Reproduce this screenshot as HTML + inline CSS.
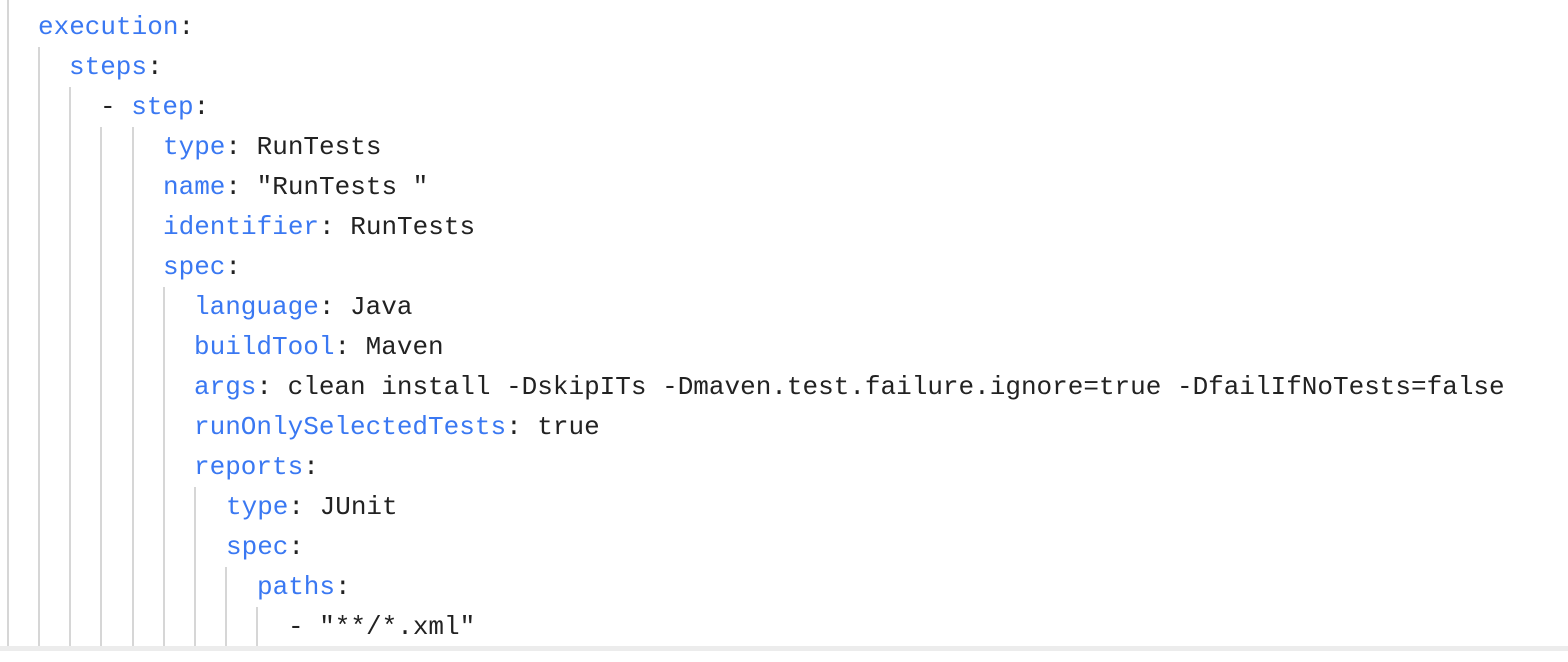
<!DOCTYPE html>
<html><head><meta charset="utf-8"><style>
html,body{margin:0;padding:0;width:1568px;height:662px;overflow:hidden;background:#fff;}
.l{position:absolute;white-space:pre;font-family:"Liberation Mono",monospace;font-size:26px;line-height:40px;color:#222;}
.k{color:#3a78f2;}
.g{position:absolute;width:2px;background:#d6d6d6;}
.bar{position:absolute;left:0;top:646px;width:1568px;height:5px;background:#ececec;}
</style></head><body>
<div class="g" style="left:7px;top:0;height:646px"></div>
<div class="g" style="left:38px;top:47px;height:599px"></div>
<div class="g" style="left:69px;top:87px;height:559px"></div>
<div class="g" style="left:100px;top:127px;height:519px"></div>
<div class="g" style="left:132px;top:127px;height:519px"></div>
<div class="g" style="left:163px;top:287px;height:359px"></div>
<div class="g" style="left:194px;top:487px;height:159px"></div>
<div class="g" style="left:225px;top:567px;height:79px"></div>
<div class="g" style="left:256px;top:607px;height:39px"></div>
<div class="bar"></div>
<div class="l" style="left:38px;top:7px"><span class="k">execution</span>:</div>
<div class="l" style="left:69px;top:47px"><span class="k">steps</span>:</div>
<div class="l" style="left:100px;top:87px">- <span class="k">step</span>:</div>
<div class="l" style="left:163px;top:127px"><span class="k">type</span>: RunTests</div>
<div class="l" style="left:163px;top:167px"><span class="k">name</span>: "RunTests "</div>
<div class="l" style="left:163px;top:207px"><span class="k">identifier</span>: RunTests</div>
<div class="l" style="left:163px;top:247px"><span class="k">spec</span>:</div>
<div class="l" style="left:194px;top:287px"><span class="k">language</span>: Java</div>
<div class="l" style="left:194px;top:327px"><span class="k">buildTool</span>: Maven</div>
<div class="l" style="left:194px;top:367px"><span class="k">args</span>: clean install -DskipITs -Dmaven.test.failure.ignore=true -DfailIfNoTests=false</div>
<div class="l" style="left:194px;top:407px"><span class="k">runOnlySelectedTests</span>: true</div>
<div class="l" style="left:194px;top:447px"><span class="k">reports</span>:</div>
<div class="l" style="left:226px;top:487px"><span class="k">type</span>: JUnit</div>
<div class="l" style="left:226px;top:527px"><span class="k">spec</span>:</div>
<div class="l" style="left:257px;top:567px"><span class="k">paths</span>:</div>
<div class="l" style="left:288px;top:607px">- "**/*.xml"</div>
</body></html>
